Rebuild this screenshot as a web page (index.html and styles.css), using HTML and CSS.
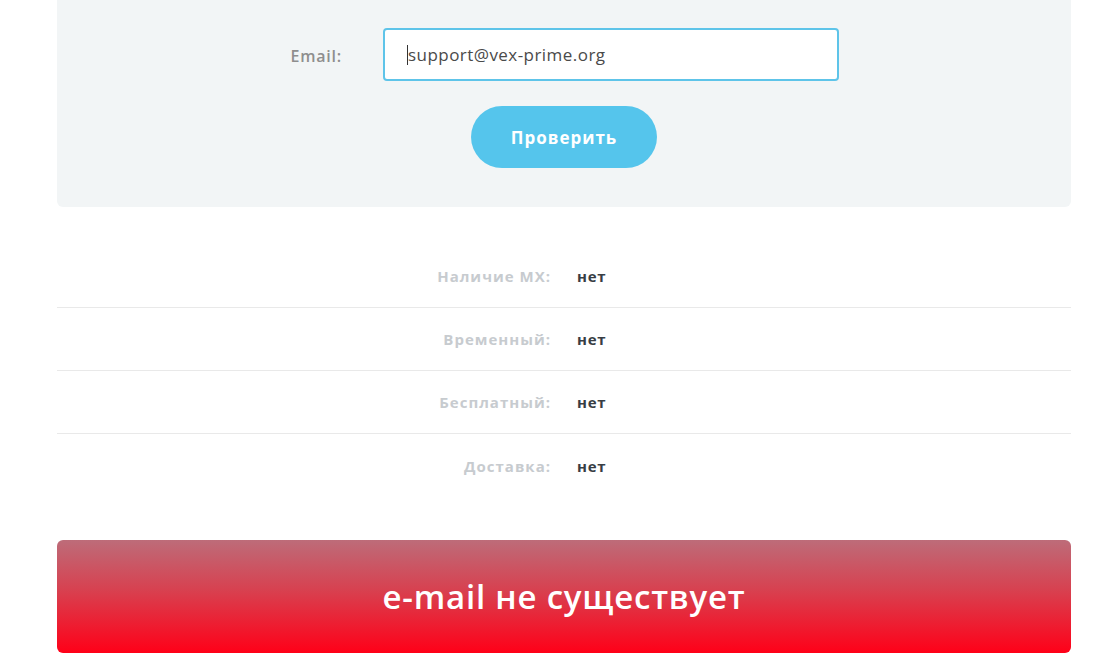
FILE: index.html
```html
<!DOCTYPE html>
<html lang="ru">
<head>
<meta charset="utf-8">
<title>Проверка email</title>
<link rel="stylesheet" href="styles.css">
</head>
<body>
<main class="wrap">
  <section class="panel">
    <div class="form-row">
      <label class="form-label" for="email">Email:</label>
      <div class="input"><span class="caret"></span>support@vex-prime.org</div>
    </div>
    <div class="btn-row">
      <button class="btn">Проверить</button>
    </div>
  </section>

  <section class="results">
    <div class="res-row"><span class="res-label">Наличие MX:</span><span class="res-value">нет</span></div>
    <div class="res-row"><span class="res-label">Временный:</span><span class="res-value">нет</span></div>
    <div class="res-row"><span class="res-label">Бесплатный:</span><span class="res-value">нет</span></div>
    <div class="res-row"><span class="res-label">Доставка:</span><span class="res-value">нет</span></div>
  </section>

  <section class="banner">e-mail не существует</section>
</main>
</body>
</html>
```

FILE: styles.css
```css
html, body {
  margin: 0;
  padding: 0;
  background: #ffffff;
}
body {
  font-family: "Open Sans", "Liberation Sans", sans-serif;
}
.wrap {
  width: 1014px;
  margin-left: 57px;
}
.panel {
  background: #f2f5f6;
  border-radius: 0 0 6px 6px;
  padding: 28px 0 39px;
}
.form-row {
  display: grid;
  grid-template-columns: 285px 456px;
  column-gap: 41px;
  align-items: center;
}
.form-label {
  text-align: right;
  font-weight: 600;
  font-size: 16px;
  letter-spacing: 0.8px;
  color: #8e8e8e;
  padding-top: 2px;
}
.input {
  box-sizing: border-box;
  height: 53px;
  border: 2px solid #5ec4e9;
  border-radius: 4px;
  background: #fff;
  padding-left: 22px;
  display: flex;
  align-items: center;
  font-size: 17px;
  letter-spacing: 0.45px;
  color: #4a4a4a;
}
.caret {
  display: inline-block;
  width: 1px;
  height: 20px;
  background: #333;
}
.btn-row {
  display: flex;
  justify-content: center;
  margin-top: 25px;
}
.btn {
  width: 186px;
  height: 62px;
  border: none;
  border-radius: 31px;
  background: #55c5ec;
  color: #fff;
  font-family: inherit;
  font-weight: 700;
  font-size: 17px;
  letter-spacing: 1px;
}
.results {
  margin-top: 38px;
}
.res-row {
  display: grid;
  grid-template-columns: 494px 1fr;
  column-gap: 26px;
  align-items: center;
  height: 63px;
  border-bottom: 1px solid #e9e9e9;
  box-sizing: border-box;
}
.res-row:last-child {
  border-bottom: none;
}
.res-label {
  text-align: right;
  font-weight: 700;
  font-size: 15px;
  letter-spacing: 1px;
  color: #c7cbcf;
}
.res-value {
  font-weight: 700;
  font-size: 15px;
  letter-spacing: 0.7px;
  color: #383d44;
}
.banner {
  margin-top: 43px;
  height: 113px;
  border-radius: 6px;
  background: linear-gradient(to bottom, #bd6c79 0%, #d8404f 45%, #ff0018 100%);
  color: #fff;
  display: flex;
  align-items: center;
  justify-content: center;
  font-size: 33px;
  font-weight: 600;
  letter-spacing: 0.8px;
}
```
